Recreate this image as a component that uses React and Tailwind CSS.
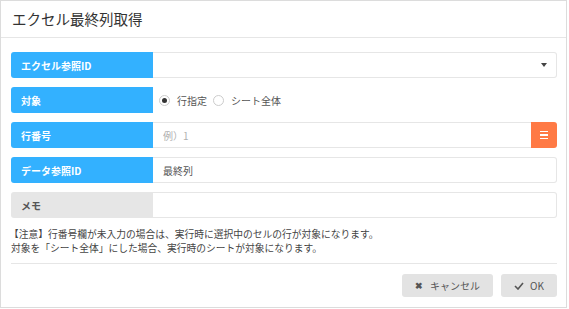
import { useState } from 'react';

const font = { fontFamily: '"Noto Sans CJK JP", "Noto Sans", sans-serif' };

const Label = ({ children, gray }) => (
  <div
    className={`w-[142px] shrink-0 flex items-center pl-[10px] rounded-l-[3px] text-[10px] font-bold ${
      gray ? 'bg-[#e6e6e6] text-[#555]' : 'bg-[#33b1ff] text-white'
    }`}
  >
    {children}
  </div>
);

const Radio = ({ checked, label, onClick }) => (
  <button type="button" onClick={onClick} className="flex items-center gap-[7px] text-[10px] text-[#555]">
    <span className="w-[11px] h-[11px] rounded-full border border-[#ccc] bg-white flex items-center justify-center">
      {checked && <span className="w-[5px] h-[5px] rounded-full bg-[#333]" />}
    </span>
    {label}
  </button>
);

const App = () => {
  const [target, setTarget] = useState('row');

  return (
    <div className="w-[567px] h-[308px] bg-white border border-[#dcdcdc] flex flex-col" style={font}>
      <div className="h-[37px] shrink-0 flex items-center px-[11px] border-b border-[#e6e6e6]">
        <h1 className="text-[14.5px] text-[#333]">エクセル最終列取得</h1>
      </div>

      <div className="flex flex-col gap-[9px] pt-[14px] pl-[10px] pr-[9px]">
        <div className="flex h-[26px]">
          <Label>エクセル参照ID</Label>
          <div className="flex-1 flex items-center justify-end pr-[9px] border border-l-0 border-[#e6e6e6] rounded-r-[3px]">
            <span className="w-0 h-0 border-l-[3px] border-r-[3px] border-t-[4px] border-l-transparent border-r-transparent border-t-[#444]" />
          </div>
        </div>

        <div className="flex h-[26px]">
          <Label>対象</Label>
          <div className="flex-1 flex items-center gap-[6px] pl-[6px]">
            <Radio checked={target === 'row'} label="行指定" onClick={() => setTarget('row')} />
            <Radio checked={target === 'sheet'} label="シート全体" onClick={() => setTarget('sheet')} />
          </div>
        </div>

        <div className="flex h-[26px]">
          <Label>行番号</Label>
          <input
            className="flex-1 min-w-0 px-[10px] text-[10px] text-[#555] placeholder-[#b0b0b0] border border-l-0 border-r-0 border-[#e6e6e6] outline-none"
            placeholder="例）1"
          />
          <button className="w-[26px] shrink-0 bg-[#ff7a45] rounded-r-[3px] flex flex-col items-center justify-center gap-[2px]">
            <span className="w-[8px] h-[1.5px] bg-white" />
            <span className="w-[8px] h-[1.5px] bg-white" />
            <span className="w-[8px] h-[1.5px] bg-white" />
          </button>
        </div>

        <div className="flex h-[26px]">
          <Label>データ参照ID</Label>
          <input
            className="flex-1 min-w-0 px-[10px] text-[10px] text-[#555] border border-l-0 border-[#e6e6e6] rounded-r-[3px] outline-none"
            defaultValue="最終列"
          />
        </div>

        <div className="flex h-[26px]">
          <Label gray>メモ</Label>
          <input className="flex-1 min-w-0 px-[10px] text-[10px] text-[#555] border border-l-0 border-[#e6e6e6] rounded-r-[3px] outline-none" />
        </div>
      </div>

      <div className="px-[10px] pt-[9px] text-[9.75px] leading-[14px] text-[#444]">
        <p className="-ml-[2px]">【注意】行番号欄が未入力の場合は、実行時に選択中のセルの行が対象になります。</p>
        <p>対象を「シート全体」にした場合、実行時のシートが対象になります。</p>
      </div>

      <div className="mx-[10px] mr-[9px] mt-[8px] border-t border-[#e6e6e6] flex justify-end gap-[8px] pt-[10px]">
        <button className="w-[91px] h-[23px] rounded-[3px] bg-[#e3e3e3] flex items-center justify-center gap-[7px] text-[10px] text-[#555]">
          <span className="text-[9px] font-bold">✖</span>
          キャンセル
        </button>
        <button className="w-[56px] h-[23px] rounded-[3px] bg-[#e3e3e3] flex items-center justify-center gap-[6px] text-[10px] text-[#555]">
          <svg width="10" height="8" viewBox="0 0 10 8">
            <path d="M1 4 L4 7 L9 1" fill="none" stroke="#555" strokeWidth="1.6" />
          </svg>
          OK
        </button>
      </div>
    </div>
  );
};

export default App;
